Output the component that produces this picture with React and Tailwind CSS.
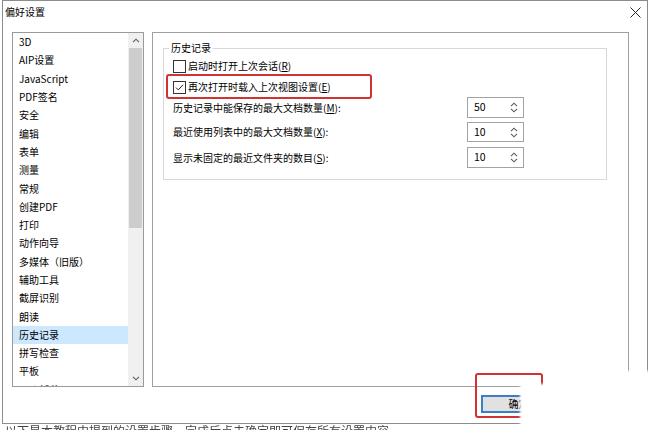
import React from 'react';

const items = [
  '3D', 'AIP设置', 'JavaScript', 'PDF签名', '安全', '编辑', '表单', '测量', '常规', '创建PDF',
  '打印', '动作向导', '多媒体（旧版）', '辅助工具', '截屏识别', '朗读', '历史记录', '拼写检查', '平板', 'Web捕获',
];

const Chevron = ({ up, className = '' }) => (
  <svg width="8" height="5" viewBox="0 0 8 5" className={className}>
    <path d={up ? 'M1 4.2 L4 1.2 L7 4.2' : 'M1 0.8 L4 3.8 L7 0.8'} fill="none" stroke="#5a5a5a" strokeWidth="1.1" />
  </svg>
);

const Check = ({ checked }) => (
  <span className="w-[13px] h-[13px] border border-[#333] bg-white flex items-center justify-center shrink-0">
    {checked && (
      <svg width="11" height="11" viewBox="0 0 11 11">
        <path d="M2 5.6 L4.3 7.9 L9 2.8" fill="none" stroke="#222" strokeWidth="1" />
      </svg>
    )}
  </span>
);

const Spin = ({ value }) => (
  <div className="w-[57px] h-full border border-[#a3a3a3] bg-white flex items-center justify-between pl-[6px] pr-[5px]">
    <span className="text-[10.5px] leading-none">{value}</span>
    <div className="flex flex-col gap-[1px]">
      <Chevron up />
      <Chevron />
    </div>
  </div>
);

const Key = ({ k }) => <span className="underline underline-offset-1">{k}</span>;

export default function App() {
  return (
    <div className="w-[650px] h-[430px] bg-white relative overflow-hidden font-['Noto_Sans_CJK_SC','Noto_Sans',sans-serif] text-[10px] text-[#000]">
      <div className="ml-[2px] w-[646px] h-[424px] border border-[#8c8c8c] flex flex-col">
        {/* title bar */}
        <div className="h-[22px] flex items-center justify-between pl-[2px] pr-[6px]">
          <span className="leading-[12px]">偏好设置</span>
          <svg width="11" height="11" viewBox="0 0 11 11">
            <path d="M0.5 0.5 L10.5 10.5 M10.5 0.5 L0.5 10.5" stroke="#222" strokeWidth="1" />
          </svg>
        </div>

        <div className="mt-[9px] pl-[9px] flex gap-[8px]">
          {/* category list */}
          <div className="w-[132px] h-[355px] border border-[#9a9a9a] flex overflow-hidden">
            <div className="flex-1 flex flex-col overflow-hidden">
              {items.map((it) => (
                <div
                  key={it}
                  className={`h-[18.3px] shrink-0 flex items-center pl-[6px] leading-none ${it === '历史记录' ? 'bg-[#cce8ff]' : ''}`}
                >
                  {it}
                </div>
              ))}
            </div>
            <div className="w-[15px] bg-[#f0f0f0] flex flex-col">
              <div className="h-[15px] flex items-center justify-center"><Chevron up /></div>
              <div className="h-[180px] mx-[1px] bg-[#cdcdcd]" />
              <div className="flex-1" />
              <div className="h-[15px] flex items-center justify-center"><Chevron /></div>
            </div>
          </div>

          {/* settings panel */}
          <div className="w-[477px] h-[355px] border border-[#a0a0a0] pl-[10px] pt-[15px]">
            <div className="relative w-[444px] h-[132px] border border-[#d8d8d8] pl-[9px] pt-[9px] flex flex-col">
              <span className="absolute -top-[7px] left-[5px] bg-white px-[2px] leading-[12px]">历史记录</span>

              <div className="h-[16px] flex items-center gap-[2px]">
                <Check />
                <span className="leading-none">启动时打开上次会话(<Key k="R" />)</span>
              </div>
              <div className="h-[20px] mt-[3px] flex items-center gap-[2px]">
                <Check checked />
                <span className="leading-none">再次打开时载入上次视图设置(<Key k="E" />)</span>
              </div>

              <div className="h-[21px] flex items-center">
                <span className="w-[294px] leading-none">历史记录中能保存的最大文档数量(<Key k="M" />):</span>
                <Spin value="50" />
              </div>
              <div className="h-[20px] mt-[4px] flex items-center">
                <span className="w-[294px] leading-none">最近使用列表中的最大文档数量(<Key k="X" />):</span>
                <Spin value="10" />
              </div>
              <div className="h-[21px] mt-[5px] flex items-center">
                <span className="w-[294px] leading-none">显示未固定的最近文件夹的数目(<Key k="S" />):</span>
                <Spin value="10" />
              </div>

              <div className="absolute left-[2px] top-[25px] w-[206px] h-[25px] border-2 border-[#cf3434] rounded-[3px]" />
            </div>
          </div>
        </div>

        {/* buttons */}
        <div className="mt-[8px] flex justify-end gap-[8px] pr-[8px]">
          <button className="w-[75px] h-[18px] bg-[#e1e1e1] border-2 border-[#3a7fc1] flex items-center justify-center leading-none">确定</button>
          <button className="w-[75px] h-[18px] bg-[#e1e1e1] border border-[#adadad] flex items-center justify-center leading-none">取消</button>
        </div>
      </div>

      {/* document text behind the dialog */}
      <div className="h-[6px] overflow-hidden pl-[5px]">
        <p className="mt-[1px] text-[12px] leading-[12px] text-[#444] whitespace-nowrap blur-[0.5px]">以下是本教程中提到的设置步骤，完成后点击确定即可保存所有设置内容</p>
      </div>

      {/* annotation and watermark */}
      <div className="absolute left-[475px] top-[373px] w-[68px] h-[45px] border-2 border-[#cf3434] rounded-[3px]" />
      <div className="absolute left-[520px] top-[384px] w-[130px] h-[46px] bg-white blur-[1px]" />
      <div className="absolute left-[545px] top-[371px] w-[105px] h-[20px] bg-white blur-[1px]" />
    </div>
  );
}
